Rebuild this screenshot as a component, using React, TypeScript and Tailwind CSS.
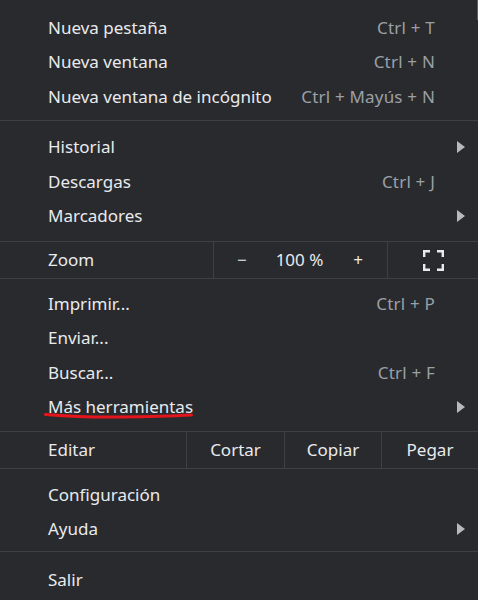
import { ReactNode } from 'react'

type Item = { label: string; shortcut?: string; submenu?: boolean }

const font = { fontFamily: '"Noto Sans", "Open Sans", sans-serif' }

function Arrow() {
  return (
    <svg width="8" height="12" viewBox="0 0 8 12" className="absolute right-[13px] top-1/2 -translate-y-1/2">
      <path d="M0 0 L8 6 L0 12 Z" fill="#b8b9bb" />
    </svg>
  )
}

function Row({ item }: { item: Item }) {
  return (
    <div className="relative flex items-center h-[34.5px] pl-12 pr-[43px]">
      <span className="flex-1 text-[#e8eaed]">{item.label}</span>
      {item.shortcut && <span className="text-[#9aa0a6] tracking-[0.2px]">{item.shortcut}</span>}
      {item.submenu && <Arrow />}
    </div>
  )
}

function Group({ items, className = '' }: { items: Item[]; className?: string }) {
  return (
    <div className={className}>
      {items.map((it) => (
        <Row key={it.label} item={it} />
      ))}
    </div>
  )
}

function Sep() {
  return <div className="h-px bg-[#3f4043]" />
}

function Cell({ children, className = '' }: { children: ReactNode; className?: string }) {
  return <div className={`flex items-center border-l border-[#3f4043] ${className}`}>{children}</div>
}

function FullscreenIcon() {
  return (
    <svg width="21" height="21" viewBox="0 0 21 21" fill="none" stroke="#e8eaed" strokeWidth="2.4">
      <path d="M1.2 7 V1.2 H7" />
      <path d="M14 1.2 H19.8 V7" />
      <path d="M19.8 14 V19.8 H14" />
      <path d="M7 19.8 H1.2 V14" />
    </svg>
  )
}

export default function App() {
  return (
    <div className="w-[478px] h-[600px] overflow-hidden bg-[#292a2d] text-[17px] relative" style={font}>
      <Group
        className="pt-[10px] pb-[6px]"
        items={[
          { label: 'Nueva pestaña', shortcut: 'Ctrl + T' },
          { label: 'Nueva ventana', shortcut: 'Ctrl + N' },
          { label: 'Nueva ventana de incógnito', shortcut: 'Ctrl + Mayús + N' },
        ]}
      />
      <Sep />
      <Group
        className="pt-[9px] pb-[8px]"
        items={[
          { label: 'Historial', submenu: true },
          { label: 'Descargas', shortcut: 'Ctrl + J' },
          { label: 'Marcadores', submenu: true },
        ]}
      />
      <Sep />
      <div className="flex h-[36px]">
        <div className="w-[213px] flex items-center pl-12 text-[#e8eaed]">Zoom</div>
        <Cell className="w-[174px] text-[#e8eaed]">
          <span className="w-[56px] text-center">−</span>
          <span className="w-[60px] text-center">100 %</span>
          <span className="w-[58px] text-center">+</span>
        </Cell>
        <Cell className="flex-1 justify-center">
          <FullscreenIcon />
        </Cell>
      </div>
      <Sep />
      <div className="relative">
        <Group
          className="pt-[7px] pb-[7px]"
          items={[
            { label: 'Imprimir...', shortcut: 'Ctrl + P' },
            { label: 'Enviar...' },
            { label: 'Buscar...', shortcut: 'Ctrl + F' },
            { label: 'Más herramientas', submenu: true },
          ]}
        />
        <svg width="150" height="8" viewBox="0 0 150 8" className="absolute left-[44px] top-[133px]">
          <path d="M1.5 2.5 Q 40 5.5 75 5 Q 120 4.5 147.5 3" stroke="#e3141b" strokeWidth="3" fill="none" strokeLinecap="round" />
        </svg>
      </div>
      <Sep />
      <div className="flex h-[36px] text-[#e8eaed]">
        <div className="w-[186px] flex items-center pl-12">Editar</div>
        <Cell className="w-[98px] justify-center">Cortar</Cell>
        <Cell className="w-[97px] justify-center">Copiar</Cell>
        <Cell className="flex-1 justify-center">Pegar</Cell>
      </div>
      <Sep />
      <Group
        className="pt-[8px] pb-[5px]"
        items={[
          { label: 'Configuración' },
          { label: 'Ayuda', submenu: true },
        ]}
      />
      <Sep />
      <Group className="pt-[10px]" items={[{ label: 'Salir' }]} />
      <div className="absolute right-0 top-0 w-px h-[20px] bg-[#5f6064]" />
    </div>
  )
}
